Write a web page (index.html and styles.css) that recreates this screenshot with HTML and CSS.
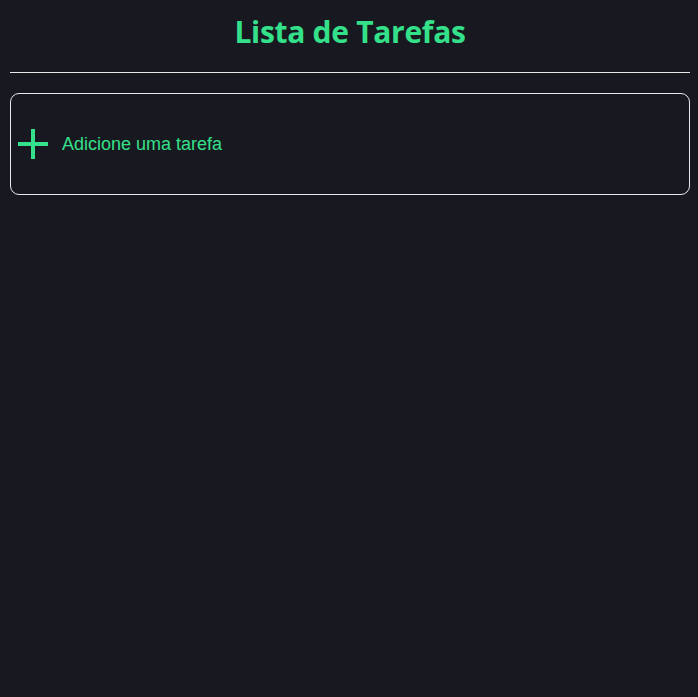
FILE: index.html
```html
<!DOCTYPE html>
<html lang="pt">
<head>
<meta charset="utf-8">
<link rel="stylesheet" href="styles.css">
</head>
<body>
<header class="header">
  <h1 class="title">Lista de Tarefas</h1>
</header>
<main class="list">
  <button class="add">
    <svg class="plus" width="32" height="32" viewBox="0 0 32 32"><path d="M16 1v30M1 16h30" stroke="#34e08a" stroke-width="4" fill="none"/></svg>
    <span class="add-label">Adicione uma tarefa</span>
  </button>
</main>
</body>
</html>
```
FILE: styles.css
```css
html, body { margin: 0; background: #181820; }
body { padding: 0 8px 0 10px; height: 697px; box-sizing: border-box; }
.header { border-bottom: 1px solid #e8e8e8; height: 72px; display: flex; justify-content: center; }
.title {
  margin: 12px 0 0;
  font-family: "Open Sans", sans-serif;
  font-weight: 700;
  font-size: 30px;
  line-height: 40px;
  letter-spacing: -0.3px;
  color: #34e08a;
}
.list { padding-top: 20px; }
.add {
  width: 100%;
  height: 102px;
  background: transparent;
  border: 1px solid #e8e8e8;
  border-radius: 9px;
  display: flex;
  align-items: center;
  gap: 13px;
  padding: 0 0 0 6px;
  cursor: pointer;
  box-sizing: border-box;
}
.plus { display: block; }
.add-label {
  font-family: "Liberation Sans", Arial, sans-serif;
  font-size: 18px;
  color: #34e08a;
}
```
